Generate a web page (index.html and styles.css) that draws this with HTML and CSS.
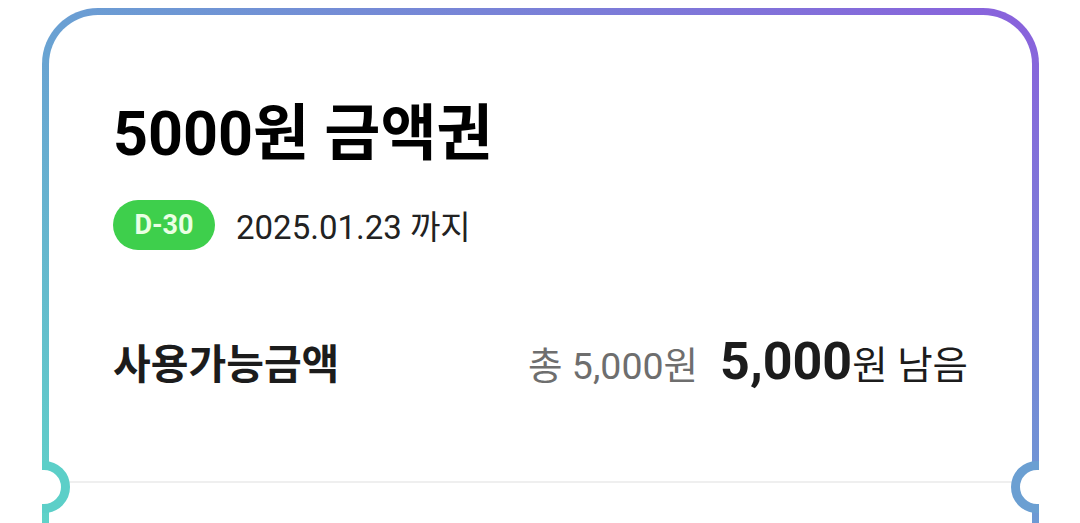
FILE: index.html
```html
<!DOCTYPE html>
<html lang="ko">
<head>
<meta charset="utf-8">
<title>5000원 금액권</title>
<link rel="stylesheet" href="styles.css">
</head>
<body>
<div class="page">
  <div class="card">
    <div class="card-inner">
      <div class="content">
        <h1 class="title">5000원 금액권</h1>
        <div class="due">
          <span class="badge">D-30</span>
          <span class="date">2025.01.23 까지</span>
        </div>
        <div class="balance">
          <span class="balance-label">사용가능금액</span>
          <span class="amounts">
            <span class="total">총 5,000원</span>
            <span class="remain"><b>5,000</b>원 남음</span>
          </span>
        </div>
      </div>
      <div class="divider"></div>
    </div>
    <div class="notch notch-left"><span class="ring"></span></div>
    <div class="notch notch-right"><span class="ring"></span></div>
  </div>
</div>
</body>
</html>
```

FILE: styles.css
```css
html, body {
  margin: 0;
  padding: 0;
  background: #ffffff;
  overflow: hidden;
}
body {
  font-family: Roboto, "Noto Sans CJK KR", sans-serif;
  color: #1c1c1c;
}
.page {
  padding: 8px 41px 0 42px;
}
.card {
  position: relative;
  height: 560px;
  padding: 7px 7px 0;
  border-radius: 56px 56px 0 0;
  background: linear-gradient(to top right, #5ed8c7 0%, #6a9fd3 50%, #8a60dc 100%);
}
.card-inner {
  height: 100%;
  background: #ffffff;
  border-radius: 49px 49px 0 0;
}
.content {
  padding: 84px 64px 0 64px;
}
.title {
  margin: 0;
  font-size: 61px;
  line-height: 70px;
  font-weight: 700;
  color: #000000;
}
.due {
  display: flex;
  align-items: center;
  gap: 21px;
  margin-top: 31px;
}
.badge {
  display: inline-flex;
  align-items: center;
  justify-content: center;
  height: 50px;
  width: 102px;
  border-radius: 25px;
  background: #3ecf4c;
  color: #eaffe4;
  font-size: 27px;
  font-weight: 700;
}
.date {
  font-size: 33px;
  color: #222222;
}
.balance {
  display: flex;
  align-items: center;
  justify-content: space-between;
  margin-top: 85px;
  height: 52px;
}
.balance-label {
  font-size: 41px;
  font-weight: 700;
  color: #1c1c1c;
}
.amounts {
  display: flex;
  align-items: baseline;
  gap: 22px;
}
.total {
  font-size: 37.5px;
  color: #6e6e6e;
}
.remain {
  font-size: 38.5px;
  color: #1c1c1c;
}
.remain b {
  font-size: 52px;
  font-weight: 700;
}
.divider {
  margin: 94px 21px 0;
  border-top: 2px solid #efefef;
}
.notch {
  position: absolute;
  top: 453px;
  width: 28px;
  height: 52px;
  overflow: hidden;
}
.notch-left {
  left: 0;
}
.notch-right {
  right: 0;
}
.ring {
  position: absolute;
  top: 0;
  box-sizing: border-box;
  width: 52px;
  height: 52px;
  border-radius: 50%;
  background: #ffffff;
  border: 9px solid #5ccfc8;
}
.notch-left .ring {
  left: -24px;
}
.notch-right .ring {
  right: -24px;
  border-color: #6b9fd2;
}
```
